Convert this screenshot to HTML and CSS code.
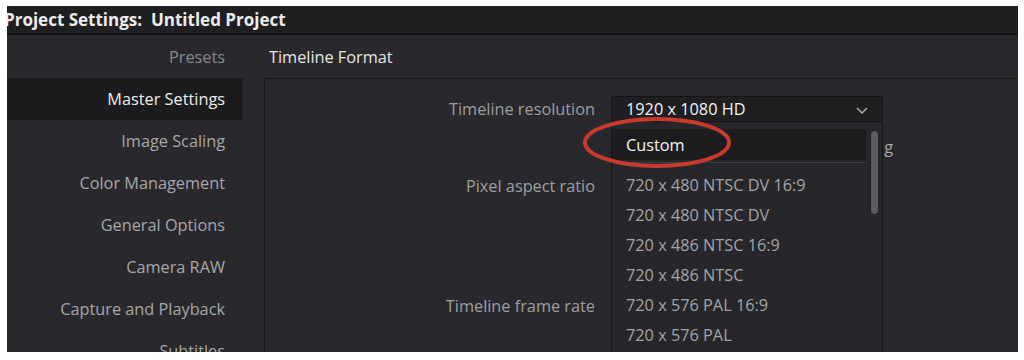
FILE: index.html
```html
<!DOCTYPE html>
<html lang="en">
<head>
    <meta charset="UTF-8">
    <title>Project Settings: Untitled Project</title>
    <link rel="stylesheet" href="styles.css">
</head>
<body>
    <div class="window">
        <div class="titlebar">Project Settings:&nbsp; Untitled Project</div>
        <div class="content">
            <aside class="sidebar">
                <div class="nav-item presets">Presets</div>
                <div class="nav-item active">Master Settings</div>
                <div class="nav-item">Image Scaling</div>
                <div class="nav-item">Color Management</div>
                <div class="nav-item">General Options</div>
                <div class="nav-item">Camera RAW</div>
                <div class="nav-item">Capture and Playback</div>
                <div class="nav-item">Subtitles</div>
            </aside>
            <main class="main">
                <h2 class="section-title">Timeline Format</h2>
                <div class="section-box">
                    <div class="row first">
                        <div class="label">Timeline resolution</div>
                        <div class="select">
                            <span>1920 x 1080 HD</span>
                            <svg class="chevron" width="12" height="7" viewBox="0 0 12 7">
                                <polyline points="1,1 6,6 11,1" fill="none" stroke="#a9a9ad" stroke-width="1.5"/>
                            </svg>
                            <div class="menu">
                                <div class="menu-item selected">Custom</div>
                                <div class="menu-sep"></div>
                                <div class="menu-item">720 x 480 NTSC DV 16:9</div>
                                <div class="menu-item">720 x 480 NTSC DV</div>
                                <div class="menu-item">720 x 486 NTSC 16:9</div>
                                <div class="menu-item">720 x 486 NTSC</div>
                                <div class="menu-item">720 x 576 PAL 16:9</div>
                                <div class="menu-item">720 x 576 PAL</div>
                                <div class="scrollbar"></div>
                            </div>
                            <svg class="circle" width="152" height="55" viewBox="0 0 152 55">
                                <ellipse cx="76" cy="27.5" rx="72" ry="23.5" fill="none" stroke="#c83a2b" stroke-width="4"/>
                            </svg>
                        </div>
                    </div>
                    <div class="row note">
                        <div class="label"></div>
                        <div class="value right">g</div>
                    </div>
                    <div class="row">
                        <div class="label">Pixel aspect ratio</div>
                    </div>
                    <div class="row"></div>
                    <div class="row"></div>
                    <div class="row"></div>
                    <div class="row">
                        <div class="label">Timeline frame rate</div>
                    </div>
                </div>
            </main>
        </div>
    </div>
</body>
</html>
```

FILE: styles.css
```css
body {
    margin: 6px 6px 8px 7px;
    background-color: #ffffff;
    font-family: "Open Sans", "Liberation Sans", sans-serif;
}

.window {
    width: 1011px;
    height: 346px;
    background-color: #29292d;
    overflow: hidden;
    display: flex;
    flex-direction: column;
}

.titlebar {
    height: 27px;
    line-height: 27px;
    background-color: #1f1f22;
    border-bottom: 2px solid #131315;
    color: #ececec;
    font-weight: bold;
    font-size: 17px;
    text-indent: -3px;
    white-space: nowrap;
    flex-shrink: 0;
}

.content {
    display: flex;
    flex-direction: row;
    flex-grow: 1;
}

.sidebar {
    width: 236px;
    padding-top: 1px;
    flex-shrink: 0;
}

.nav-item {
    height: 42px;
    line-height: 42px;
    text-align: right;
    padding-right: 18px;
    font-size: 16.3px;
    color: #a6a6a9;
    white-space: nowrap;
}

.nav-item.presets {
    color: #87878a;
}

.nav-item.active {
    background-color: #1c1c1f;
    color: #ececec;
}

.main {
    flex-grow: 1;
    padding-left: 21px;
    padding-top: 1px;
}

.section-title {
    margin: 0;
    height: 42px;
    line-height: 42px;
    padding-left: 5px;
    font-size: 16.3px;
    font-weight: normal;
    color: #e6e6e6;
}

.section-box {
    border-top: 1px solid #19191b;
    border-left: 1px solid #19191b;
    height: 400px;
    padding-top: 17px;
}

.row {
    display: flex;
    align-items: center;
    gap: 16px;
    height: 30px;
    font-size: 16.3px;
}

.row.first {
    height: 26px;
    margin-bottom: 7px;
}

.row.note {
    margin-bottom: 12px;
}

.label {
    width: 330px;
    text-align: right;
    color: #9e9ea1;
    white-space: nowrap;
    flex-shrink: 0;
}

.value {
    color: #a6a6a9;
    white-space: nowrap;
}

.value.right {
    width: 282px;
    text-align: right;
    padding-top: 5px;
}

.select {
    position: relative;
    width: 256px;
    height: 24px;
    line-height: 24px;
    background-color: #1f1f22;
    border: 1px solid #151517;
    border-radius: 2px;
    padding-left: 14px;
    color: #f2f2f2;
}

.chevron {
    position: absolute;
    right: 14px;
    top: 10px;
}

.menu {
    position: absolute;
    top: 25px;
    left: -1px;
    width: 270px;
    height: 260px;
    background-color: #27272b;
    border-left: 1px solid #151517;
    border-right: 1px solid #151517;
    padding-top: 7px;
    z-index: 2;
}

.menu-item {
    height: 30px;
    line-height: 30px;
    padding-left: 14px;
    color: #a3a3a6;
    white-space: nowrap;
}

.menu-item.selected {
    height: 31px;
    line-height: 32px;
    margin-right: 16px;
    background-color: #1d1d20;
    color: #f2f2f2;
}

.menu-sep {
    height: 1px;
    margin: 2px 16px 7px 0;
    background-color: #3c3c41;
}

.scrollbar {
    position: absolute;
    right: 3px;
    top: 8px;
    width: 9px;
    height: 85px;
    border-radius: 5px;
    background-color: #5b5b60;
    border: 1px solid #1d1d20;
    box-sizing: border-box;
}

.circle {
    position: absolute;
    left: -31px;
    top: 18px;
    z-index: 3;
}
```
